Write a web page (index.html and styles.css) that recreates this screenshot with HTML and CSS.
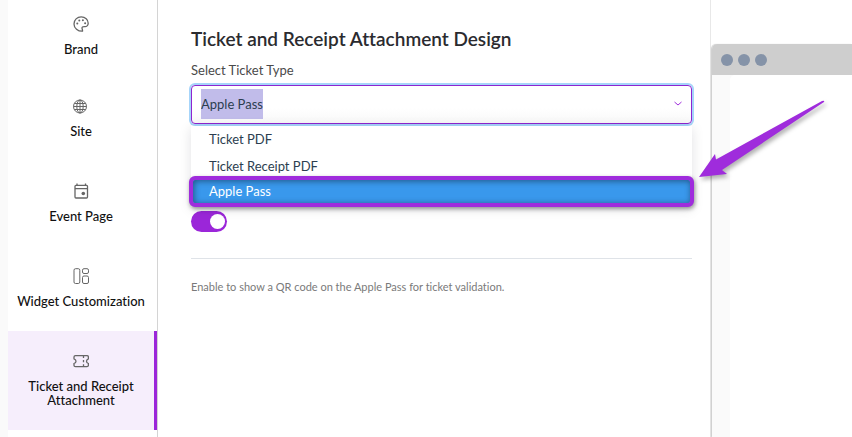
FILE: index.html
```html
<!DOCTYPE html>
<html lang="en">
<head>
    <meta charset="UTF-8">
    <meta name="viewport" content="width=device-width, initial-scale=1.0">
    <title>Ticket and Receipt Attachment Design</title>
    <link rel="stylesheet" href="styles.css">
</head>
<body>
    <nav class="sidebar">
        <a href="#brand" class="nav-item">
            <svg class="icon" viewBox="0 0 16 16">
                <path d="M9.500 15.200C4.800 15.400 1 12 1 7.900C1 3.900 4.200 .9 8.200 .9C12.200 .9 15.200 3.700 15.200 7.200C15.200 9.600 13.600 10.800 11.600 10.600C9.600 10.400 8.700 11.300 9.100 12.600C9.400 13.700 9.700 14.300 9.500 15.200Z"/>
                <g class="fill"><circle cx="4.300" cy="7.600" r="1"/><circle cx="6.300" cy="4.500" r="1"/><circle cx="9.900" cy="4.300" r="1"/><circle cx="12.100" cy="7.300" r="1"/></g>
            </svg>
            <span>Brand</span>
        </a>
        <a href="#site" class="nav-item">
            <svg class="icon thin" viewBox="0 0 16 16">
                <circle cx="7" cy="8.500" r="6.500"/>
                <ellipse cx="7" cy="8.500" rx="3.200" ry="6.500"/>
                <path d="M7 2V15M.5 8.500H13.500M1.500 5.500H12.500M1.500 11.500H12.500"/>
            </svg>
            <span>Site</span>
        </a>
        <a href="#event" class="nav-item">
            <svg class="icon" viewBox="0 0 16 16">
                <rect x="2" y="2.300" width="12.500" height="12.700" rx="1"/>
                <path d="M2 5.700H14.500M4 .5V2.500M12.500 .5V2.500"/>
                <circle class="fill" cx="10.300" cy="10.500" r="1.800"/>
            </svg>
            <span>Event Page</span>
        </a>
        <a href="#widget" class="nav-item">
            <svg class="icon thin" viewBox="0 0 16 16">
                <rect x="1" y=".7" width="5.800" height="14.800" rx="1.500"/>
                <rect x="9.500" y=".7" width="6" height="4.800" rx="1.500"/>
                <rect x="9.500" y="8" width="6" height="7.500" rx="1.500"/>
            </svg>
            <span>Widget Customization</span>
        </a>
        <a href="#ticket" class="nav-item active">
            <svg class="icon" viewBox="0 0 16 16">
                <path d="M2.500 2.700H14Q15.400 2.700 15.400 4V5.800Q13.500 6.500 13.500 8.200Q13.500 9.800 15.400 10.500V12.300Q15.400 13.600 14 13.600H2.500Q1 13.600 1 12.300V10.500Q3 9.800 3 8.200Q3 6.500 1 5.800V4Q1 2.700 2.500 2.700Z"/>
                <path d="M10.500 3V5M10.500 7V9.300M10.500 11.300V13.300"/>
            </svg>
            <span>Ticket and Receipt Attachment</span>
        </a>
    </nav>

    <main class="settings">
        <h1>Ticket and Receipt Attachment Design</h1>
        <label class="field-label" for="ticketType">Select Ticket Type</label>
        <div class="select">
            <div class="select-box">
                <input type="text" id="ticketType" value="Apple Pass" role="combobox" aria-expanded="true" aria-controls="ticketOptions" autocomplete="off" spellcheck="false">
                <svg class="chevron" viewBox="0 0 8 8"><path d="M.5 2L4 5L7.500 2"/></svg>
            </div>
            <ul class="options" id="ticketOptions" role="listbox">
                <li role="option">Ticket PDF</li>
                <li role="option">Ticket Receipt PDF</li>
                <li role="option" class="selected" aria-selected="true">Apple Pass</li>
            </ul>
            <svg class="arrow" viewBox="0 0 130 82">
                <path d="M2 80L18 57L19 62.500L125 4Q128 3 127 5L25 73L30 77Z"/>
            </svg>
        </div>
        <input type="checkbox" class="toggle" id="qrToggle" aria-describedby="qrHelp" aria-label="Show QR code" checked>
        <hr>
        <p class="help" id="qrHelp">Enable to show a QR code on the Apple Pass for ticket validation.</p>
    </main>

    <aside class="preview">
        <div class="browser">
            <div class="browser-bar"><i></i><i></i><i></i></div>
            <div class="browser-page"></div>
        </div>
    </aside>

    <script src="script.js"></script>
</body>
</html>
```
FILE: styles.css
```css
* {
    box-sizing: border-box;
}
body {
    display: flex;
    min-height: 100vh;
    margin: 0;
    padding-left: 8px;
    overflow: hidden;
    background: linear-gradient(to right, #fafafa 8px, #fff 8px);
    font-family: Lato, "Liberation Sans", sans-serif;
    font-variant-ligatures: none;
    color: #2b2b2f;
}

/* Sidebar */
.sidebar {
    flex: 0 0 150px;
    border-right: 1px solid #d4d4d4;
}
.nav-item {
    display: flex;
    flex-direction: column;
    align-items: center;
    gap: 10px;
    padding: 22px 11px 23px 8px;
    font-size: 13px;
    font-weight: 500;
    line-height: 14px;
    text-align: center;
    color: #111;
    text-decoration: none;
}
.nav-item span {
    margin: 0 -4px;
}
.nav-item:first-child {
    padding-top: 16px;
    padding-bottom: 20px;
}
.nav-item.active {
    background-color: #f6eefc;
    box-shadow: inset -3px 0 #9b26d9;
}
.icon {
    width: 16px;
    height: 16px;
    fill: none;
    stroke: #666;
    stroke-width: 1.3;
}
.icon.thin {
    stroke-width: 1;
}
.icon .fill {
    fill: #666;
    stroke: none;
}

/* Settings form */
.settings {
    flex: 1;
    padding: 26px 18px 0 33px;
}
h1 {
    margin: 0;
    font-size: 19px;
    font-weight: 600;
    line-height: 26px;
}
.field-label {
    display: block;
    margin: 8px 0 5px;
    font-size: 13px;
    line-height: 20px;
    color: #4a4a4a;
}
.select {
    position: relative;
    margin-bottom: 87px;
}
.select-box {
    display: flex;
    align-items: center;
    height: 39px;
    padding: 0 9px 1px;
    border: 1px solid #8f25cf;
    border-radius: 4px;
    background: linear-gradient(#fff 60%, #f8f8f8);
    box-shadow: 0 0 0 2px #a6d5fa;
}
.select-box input {
    flex: 1;
    height: 30px;
    padding: 0;
    border: 0;
    outline: 0;
    background: none;
    font: 13px/30px Lato, "Liberation Sans", sans-serif;
    color: #2c3e50;
}
.select-box input::selection {
    background-color: #c1bcea;
    color: #2c3e50;
}
.chevron {
    width: 8px;
    height: 8px;
    fill: none;
    stroke: #a030dc;
}
.options {
    position: absolute;
    top: 41px;
    left: 0;
    right: 0;
    margin: 0;
    padding: 0;
    list-style: none;
    background-color: #fff;
    box-shadow: 0 2px 12px rgba(0, 20, 30, 0.12);
    font-size: 13px;
    line-height: 27px;
    color: #2c3e50;
}
.options li {
    padding: 0 18px;
}
.options .selected {
    margin: -4px -2px 0;
    padding: 0 16px;
    border: 4px solid #9f2cdc;
    border-radius: 6px;
    background-color: #3998ec;
    box-shadow: 1px 2px 4px rgba(0, 0, 0, 0.4), inset 1px 1px 6px rgba(0, 0, 0, 0.45);
    line-height: 23px;
    color: #fff;
}
.arrow {
    position: absolute;
    top: 12px;
    left: calc(100% + 5px);
    width: 130px;
    height: 82px;
    fill: #9f2cdc;
    filter: drop-shadow(2px 3px 2px rgba(0, 0, 0, 0.3));
}
.toggle {
    appearance: none;
    display: flex;
    align-items: center;
    justify-content: flex-end;
    width: 36px;
    height: 21px;
    margin: 0;
    padding: 0 2px;
    border-radius: 11px;
    background-color: #9b26d9;
}
.toggle::before {
    content: "";
    width: 15px;
    height: 15px;
    border-radius: 50%;
    background-color: #fff;
}
hr {
    margin: 26px 0 18px;
    border: 0;
    border-top: 1px solid #dfe3e8;
}
.help {
    margin: 0;
    font-size: 11px;
    line-height: 20px;
    color: #7a7a7a;
}

/* Browser mockup */
.preview {
    flex: 0 0 142px;
    display: flex;
    padding-top: 44px;
    border-left: 1px solid #e8e8e8;
}
.browser {
    flex: 1;
    display: flex;
    flex-direction: column;
    margin-left: 1px;
    border-radius: 5px 0 0;
    background-color: #fafafa;
    box-shadow: -1px 0 1px rgba(0, 0, 0, 0.2);
}
.browser-bar {
    display: flex;
    align-items: center;
    gap: 5px;
    height: 31px;
    padding-left: 9px;
    border-radius: 5px 0 0;
    background-color: #cecece;
}
.browser-bar i {
    width: 12px;
    height: 12px;
    border-radius: 50%;
    background-color: #8593a8;
}
.browser-page {
    flex: 1;
    margin-left: 18px;
    border-radius: 5px 0 0;
    background-color: #fff;
}
```
FILE: script.js
```js
// Open with the current ticket type highlighted, ready to be replaced
const ticketType = document.getElementById('ticketType');
ticketType.focus();
ticketType.select();
```
